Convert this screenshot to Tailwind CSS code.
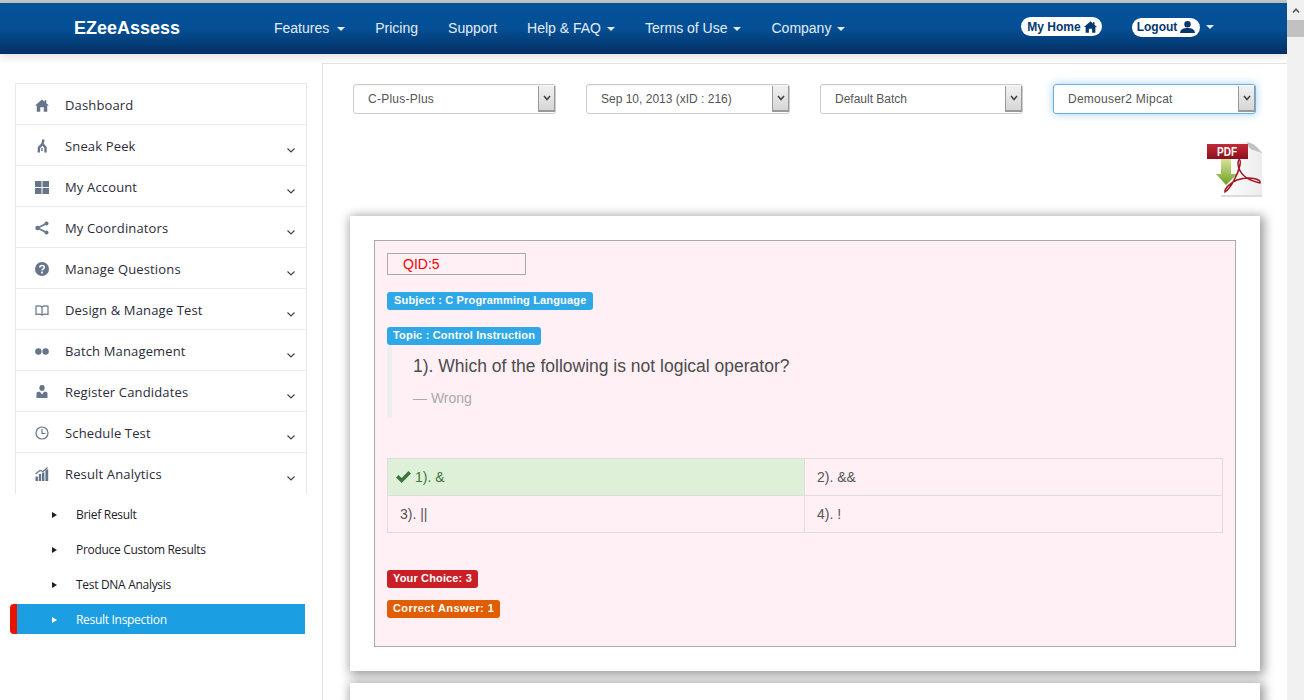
<!DOCTYPE html>
<html lang="en">
<head>
    <meta charset="UTF-8">
    <title>EZeeAssess</title>
    <script src="https://cdn.jsdelivr.net/npm/@tailwindcss/browser@4"></script>
</head>
<body class="bg-white font-['Liberation_Sans',Arial,sans-serif] text-[#555]">
<div class="flex h-[700px] w-[1304px] overflow-hidden">
    <div class="w-[1287px] shrink-0 h-[700px] overflow-hidden">
        <!-- top navbar -->
        <div class="h-[3px] bg-[#c4c4c4]"></div>
        <header class="relative z-10 h-[51px] flex items-center bg-gradient-to-b from-[#04529b] via-[#044f95] to-[#033064] text-[#e4ecf5] text-[14px] shadow-[0_3px_8px_rgba(0,0,0,0.12)]">
            <a class="w-[274px] pl-[74px] text-[18px] font-bold text-white">EZeeAssess</a>
            <nav class="flex gap-[30px] items-center -mt-[1px]">
                <a class="flex items-center gap-[8px]">Features <span class="w-0 h-0 border-x-[4px] border-x-transparent border-t-[4px] border-t-[#e4ecf5] mt-[2px]"></span></a>
                <a>Pricing</a>
                <a>Support</a>
                <a class="flex items-center gap-[6px]">Help &amp; FAQ <span class="w-0 h-0 border-x-[4px] border-x-transparent border-t-[4px] border-t-[#e4ecf5] mt-[2px]"></span></a>
                <a class="flex items-center gap-[6px]">Terms of Use <span class="w-0 h-0 border-x-[4px] border-x-transparent border-t-[4px] border-t-[#e4ecf5] mt-[2px]"></span></a>
                <a class="flex items-center gap-[6px]">Company <span class="w-0 h-0 border-x-[4px] border-x-transparent border-t-[4px] border-t-[#e4ecf5] mt-[2px]"></span></a>
            </nav>
            <div class="ml-auto mr-[73px] flex items-center -mt-[3px]">
                <a class="flex items-center justify-center gap-[3px] w-[81px] h-[19px] rounded-full bg-white text-[12px] font-bold text-[#06386f] -mt-[1px] pl-[1px]">My Home
                    <svg class="w-[13px] h-[12px]" viewBox="0 0 16 14" fill="#06386f"><path d="M8 0 L11 2.6 L11 1 L13 1 L13 4.4 L16 7 L14 7 L14 14 L10 14 L10 9 L6 9 L6 14 L2 14 L2 7 L0 7 Z"/></svg>
                </a>
                <a class="ml-[30px] flex items-center justify-center gap-[2px] w-[68px] h-[19px] rounded-full bg-white text-[12px] font-bold text-[#06386f] pl-[1px]">Logout
                    <svg class="w-[17px] h-[12px]" viewBox="0 0 16 13" fill="#06386f"><circle cx="8" cy="3.5" r="3.5"/><path d="M0 13 C0 8.5 4 7.5 8 7.5 C12 7.5 16 8.5 16 13 Z"/></svg>
                </a>
                <span class="ml-[6px] w-0 h-0 border-x-[4px] border-x-transparent border-t-[4px] border-t-[#e4ecf5]"></span>
            </div>
        </header>

        <div class="flex">
            <!-- left menu -->
            <aside class="w-[322px] shrink-0 pt-[29px] pl-[10px] font-['Open_Sans',sans-serif]">
                <ul class="ml-[5px] w-[292px] border border-b-0 border-[#e8e8e8] text-[13px] text-[#2b2b3a] tracking-[0.15px]">
                    <li class="h-[41px] flex items-center border-b border-[#ececec] pl-[19px] pt-[4px]">
                        <svg class="w-[14px] h-[13px] mr-[16px] mb-[2px]" viewBox="0 0 16 14" fill="#66758a"><path d="M8 0 L11 2.6 L11 1 L13 1 L13 4.4 L16 7 L14 7 L14 14 L10 14 L10 9 L6 9 L6 14 L2 14 L2 7 L0 7 Z"/></svg>Dashboard
                    </li>
                    <li class="h-[41px] flex items-center border-b border-[#ececec] pl-[19px] pt-[4px]">
                        <svg class="w-[14px] h-[14px] mr-[16px] mb-[2px]" viewBox="0 0 14 14" fill="none" stroke="#66758a" stroke-width="2.4"><path d="M8.5 0.5 L7.5 5 L4 8.5 L3.8 13.5"/><path d="M7.5 5 L10.5 8.5 L10.5 13.5"/><path d="M7 9 L7 12" stroke-width="1.4"/></svg>Sneak Peek
                        <svg class="ml-auto mr-[11px] mt-[6px] w-[8px] h-[5px]" viewBox="0 0 8 5" fill="none" stroke="#444" stroke-width="1.2"><path d="M0.5 0.5 L4 4 L7.5 0.5"/></svg>
                    </li>
                    <li class="h-[41px] flex items-center border-b border-[#ececec] pl-[19px] pt-[4px]">
                        <svg class="w-[14px] h-[13px] mr-[16px] mb-[2px]" viewBox="0 0 14 13" fill="#66758a"><rect width="6.5" height="6"/><rect x="7.5" width="6.5" height="6"/><rect y="7" width="6.5" height="6"/><rect x="7.5" y="7" width="6.5" height="6"/></svg>My Account
                        <svg class="ml-auto mr-[11px] mt-[6px] w-[8px] h-[5px]" viewBox="0 0 8 5" fill="none" stroke="#444" stroke-width="1.2"><path d="M0.5 0.5 L4 4 L7.5 0.5"/></svg>
                    </li>
                    <li class="h-[41px] flex items-center border-b border-[#ececec] pl-[19px] pt-[4px]">
                        <svg class="w-[14px] h-[14px] mr-[16px] mb-[2px]" viewBox="0 0 14 14" fill="#66758a" stroke="#66758a"><path d="M11.5 2.5 L2.5 7 L11.5 11.5" fill="none" stroke-width="1.6"/><circle cx="11.5" cy="2.5" r="2" stroke="none"/><circle cx="2.5" cy="7" r="2.2" stroke="none"/><circle cx="11.5" cy="11.5" r="2" stroke="none"/></svg>My Coordinators
                        <svg class="ml-auto mr-[11px] mt-[6px] w-[8px] h-[5px]" viewBox="0 0 8 5" fill="none" stroke="#444" stroke-width="1.2"><path d="M0.5 0.5 L4 4 L7.5 0.5"/></svg>
                    </li>
                    <li class="h-[41px] flex items-center border-b border-[#ececec] pl-[19px] pt-[4px]">
                        <svg class="w-[14px] h-[14px] mr-[16px] mb-[2px]" viewBox="0 0 14 14"><circle cx="7" cy="7" r="7" fill="#66758a"/><path d="M4.8 5.4 C4.8 2.9 9.3 2.9 9.3 5.3 C9.3 6.9 7 6.9 7 8.6" fill="none" stroke="#fff" stroke-width="1.6"/><rect x="6.1" y="9.6" width="1.8" height="1.8" fill="#fff"/></svg>Manage Questions
                        <svg class="ml-auto mr-[11px] mt-[6px] w-[8px] h-[5px]" viewBox="0 0 8 5" fill="none" stroke="#444" stroke-width="1.2"><path d="M0.5 0.5 L4 4 L7.5 0.5"/></svg>
                    </li>
                    <li class="h-[41px] flex items-center border-b border-[#ececec] pl-[19px] pt-[4px]">
                        <svg class="w-[14px] h-[11px] mr-[16px] mb-[2px]" viewBox="0 0 14 11" fill="none" stroke="#66758a" stroke-width="1.2"><path d="M7 2 C5.5 0.8 3 0.8 1 1.2 L1 9.5 C3 9 5.5 9 7 10 C8.5 9 11 9 13 9.5 L13 1.2 C11 0.8 8.5 0.8 7 2 Z M7 2 L7 10"/></svg>Design &amp; Manage Test
                        <svg class="ml-auto mr-[11px] mt-[6px] w-[8px] h-[5px]" viewBox="0 0 8 5" fill="none" stroke="#444" stroke-width="1.2"><path d="M0.5 0.5 L4 4 L7.5 0.5"/></svg>
                    </li>
                    <li class="h-[41px] flex items-center border-b border-[#ececec] pl-[19px] pt-[4px]">
                        <svg class="w-[14px] h-[7px] mr-[16px] mb-[2px]" viewBox="0 0 14 7" fill="#66758a"><circle cx="3.4" cy="3.5" r="3.2"/><circle cx="10.6" cy="3.5" r="3.2"/></svg>Batch Management
                        <svg class="ml-auto mr-[11px] mt-[6px] w-[8px] h-[5px]" viewBox="0 0 8 5" fill="none" stroke="#444" stroke-width="1.2"><path d="M0.5 0.5 L4 4 L7.5 0.5"/></svg>
                    </li>
                    <li class="h-[41px] flex items-center border-b border-[#ececec] pl-[19px] pt-[4px]">
                        <svg class="w-[14px] h-[14px] mr-[16px] mb-[2px]" viewBox="0 0 14 14" fill="#66758a"><rect x="4.4" y="0" width="5.2" height="6" rx="2.4"/><path d="M1.5 13 L1.5 8.5 C1.5 7 3 6.8 5 6.8 L7 9.5 L9 6.8 C11 6.8 12.5 7 12.5 8.5 L12.5 13 Z"/></svg>Register Candidates
                        <svg class="ml-auto mr-[11px] mt-[6px] w-[8px] h-[5px]" viewBox="0 0 8 5" fill="none" stroke="#444" stroke-width="1.2"><path d="M0.5 0.5 L4 4 L7.5 0.5"/></svg>
                    </li>
                    <li class="h-[41px] flex items-center border-b border-[#ececec] pl-[19px] pt-[4px]">
                        <svg class="w-[14px] h-[14px] mr-[16px] mb-[2px]" viewBox="0 0 14 14" fill="none" stroke="#66758a" stroke-width="1.2"><circle cx="7" cy="7" r="6"/><path d="M7 3 L7 7.5 L10.5 7.5"/></svg>Schedule Test
                        <svg class="ml-auto mr-[11px] mt-[6px] w-[8px] h-[5px]" viewBox="0 0 8 5" fill="none" stroke="#444" stroke-width="1.2"><path d="M0.5 0.5 L4 4 L7.5 0.5"/></svg>
                    </li>
                    <li class="h-[41px] flex items-center border-b border-transparent pl-[19px] pt-[4px]">
                        <svg class="w-[14px] h-[14px] mr-[16px] mb-[2px]" viewBox="0 0 14 14" fill="#66758a"><rect x="0.5" y="9.5" width="2.4" height="4.5"/><rect x="3.8" y="7" width="2.4" height="7"/><rect x="7" y="5.5" width="2.4" height="8.5"/><rect x="10.4" y="2.5" width="2.8" height="11.5"/><path d="M0.5 7 L5 3.5 L8 4.5 L12.5 0.5" fill="none" stroke="#66758a" stroke-width="1.2"/></svg>Result Analytics
                        <svg class="ml-auto mr-[11px] mt-[6px] w-[8px] h-[5px]" viewBox="0 0 8 5" fill="none" stroke="#444" stroke-width="1.2"><path d="M0.5 0.5 L4 4 L7.5 0.5"/></svg>
                    </li>
                </ul>
                <ul class="w-[295px] pt-[3px] text-[12px] text-[#1d1d2b] tracking-[-0.3px]">
                    <li class="h-[35px] flex items-center pl-[42px]"><span class="w-0 h-0 border-y-[3px] border-y-transparent border-l-[5px] border-l-[#1d1d2b] mr-[19px]"></span>Brief Result</li>
                    <li class="h-[35px] flex items-center pl-[42px]"><span class="w-0 h-0 border-y-[3px] border-y-transparent border-l-[5px] border-l-[#1d1d2b] mr-[19px]"></span>Produce Custom Results</li>
                    <li class="h-[35px] flex items-center pl-[42px]"><span class="w-0 h-0 border-y-[3px] border-y-transparent border-l-[5px] border-l-[#1d1d2b] mr-[19px]"></span>Test DNA Analysis</li>
                    <li class="h-[30px] mt-[2px] flex items-center pl-[35px] pt-[1px] bg-[#1b9fe2] text-white border-l-[7px] border-l-[#e81400] rounded-l-[4px]"><span class="w-0 h-0 border-y-[3px] border-y-transparent border-l-[5px] border-l-white mr-[19px]"></span>Result Inspection</li>
                </ul>
            </aside>

            <!-- main content -->
            <main class="flex-1 mt-[9px] h-[640px] border-l border-t border-[#e2e2e2] text-[12px] text-[#555]">
                <div class="flex gap-[30px] pl-[30px] pt-[20px]">
                    <div class="w-[203px] h-[30px] flex border border-[#ccc] rounded-[3px] shadow-[inset_0_1px_1px_rgba(0,0,0,0.05)]">
                        <span class="flex-1 pl-[14px] leading-[28px] tracking-[0.25px]">C-Plus-Plus</span>
                        <span class="w-[17px] my-[1px] flex items-center justify-center border-x border-[#999] border-b-2 bg-gradient-to-b from-[#f1f1f1] to-[#d6d6d6]"><svg class="w-[8px] h-[6px]" viewBox="0 0 8 6" fill="none" stroke="#444" stroke-width="1.6"><path d="M1 1 L4 4.5 L7 1"/></svg></span>
                    </div>
                    <div class="w-[204px] h-[30px] flex border border-[#ccc] rounded-[3px] shadow-[inset_0_1px_1px_rgba(0,0,0,0.05)]">
                        <span class="flex-1 pl-[14px] leading-[28px]">Sep 10, 2013 (xID : 216)</span>
                        <span class="w-[17px] my-[1px] flex items-center justify-center border-x border-[#999] border-b-2 bg-gradient-to-b from-[#f1f1f1] to-[#d6d6d6]"><svg class="w-[8px] h-[6px]" viewBox="0 0 8 6" fill="none" stroke="#444" stroke-width="1.6"><path d="M1 1 L4 4.5 L7 1"/></svg></span>
                    </div>
                    <div class="w-[203px] h-[30px] flex border border-[#ccc] rounded-[3px] shadow-[inset_0_1px_1px_rgba(0,0,0,0.05)]">
                        <span class="flex-1 pl-[14px] leading-[28px]">Default Batch</span>
                        <span class="w-[17px] my-[1px] flex items-center justify-center border-x border-[#999] border-b-2 bg-gradient-to-b from-[#f1f1f1] to-[#d6d6d6]"><svg class="w-[8px] h-[6px]" viewBox="0 0 8 6" fill="none" stroke="#444" stroke-width="1.6"><path d="M1 1 L4 4.5 L7 1"/></svg></span>
                    </div>
                    <div class="w-[203px] h-[30px] flex border border-[#66afe9] rounded-[3px] shadow-[0_0_8px_rgba(102,175,233,0.6)]">
                        <span class="flex-1 pl-[14px] leading-[28px] tracking-[0.25px]">Demouser2 Mipcat</span>
                        <span class="w-[17px] my-[1px] flex items-center justify-center border-x border-[#999] border-b-2 bg-gradient-to-b from-[#f1f1f1] to-[#d6d6d6]"><svg class="w-[8px] h-[6px]" viewBox="0 0 8 6" fill="none" stroke="#444" stroke-width="1.6"><path d="M1 1 L4 4.5 L7 1"/></svg></span>
                    </div>
                </div>

                <!-- pdf download -->
                <div class="flex justify-end pr-[24px] pt-[27px] h-[102px]">
                    <svg class="w-[56px] h-[57px]" viewBox="0 0 56 57">
                        <defs>
                            <linearGradient id="pdfred" x1="0" y1="0" x2="0" y2="1"><stop offset="0" stop-color="#c22a38"/><stop offset="1" stop-color="#8c0f1c"/></linearGradient>
                            <linearGradient id="pdfgreen" x1="0" y1="0" x2="0" y2="1"><stop offset="0" stop-color="#d5e598"/><stop offset="1" stop-color="#6f9e1f"/></linearGradient>
                            <linearGradient id="pdfpage" x1="0" y1="0" x2="1" y2="0"><stop offset="0" stop-color="#ffffff"/><stop offset="1" stop-color="#ececec"/></linearGradient>
                        </defs>
                        <path d="M14 1 L40 1 C42 8 48 8 55 11 L55 55 L14 55 Z" fill="url(#pdfpage)"/>
                        <path d="M40 1 C41 10 48 9 55 12 C50 5 46 2 40 1 Z" fill="#c2c2c2"/>
                        <rect x="14" y="54" width="41" height="2" fill="#dcdcdc"/>
                        <rect x="0" y="3" width="41" height="15" fill="url(#pdfred)"/>
                        <text x="10" y="14.5" font-size="12.5" font-weight="700" fill="#fff" font-family="'Liberation Sans',sans-serif" textLength="20" lengthAdjust="spacingAndGlyphs">PDF</text>
                        <path d="M14 18 L24 18 L24 33 L30 33 L19 44 L9 33 L14 33 Z" fill="url(#pdfgreen)"/>
                        <path d="M18 51 C24 47 31 33 33 24 C34 17 31 17 31 23 C32 33 39 39 53 42 C55 38 42 35 30 39 C24 41 17 48 18 51 Z" fill="none" stroke="#a3141f" stroke-width="1.5"/>
                    </svg>
                </div>

                <!-- question card -->
                <section class="ml-[27px] w-[910px] h-[455px] bg-white p-[24px] shadow-[2px_2px_10px_2px_rgba(0,0,0,0.4)]">
                    <div class="h-[407px] border border-[#aaa] bg-[#fff0f5] px-[12px] pt-[12px]">
                        <div class="w-[139px] h-[22px] border border-[#aaa] pl-[15px] text-[14px] leading-[20px] text-[#f00]">QID:5</div>
                        <div class="mt-[16px]"><span class="inline-block h-[18px] px-[7px] rounded-[3px] bg-[#2fa8e8] text-[11px] leading-[17px] font-bold text-white tracking-[0.17px]">Subject : C Programming Language</span></div>
                        <div class="mt-[17px]"><span class="block w-fit h-[18px] px-[6px] rounded-[3px] bg-[#2fa8e8] text-[11px] leading-[17px] font-bold text-white tracking-[0.18px]">Topic : Control Instruction</span></div>
                        <blockquote class="h-[73px] border-l-[5px] border-[#eee] pl-[21px] pt-[10px]">
                            <p class="text-[17.5px] leading-[22px] text-[#4c4c4c]">1). Which of the following is not logical operator?</p>
                            <p class="mt-[11px] text-[14px] leading-[20px] text-[#aaa]">— Wrong</p>
                        </blockquote>
                        <table class="mt-[40px] w-[836px] table-fixed border-collapse text-[14px] text-[#555]">
                            <tbody>
                                <tr class="h-[37px]">
                                    <td class="w-[417px] border border-[#ddd] bg-[#dff0d8] pl-[8px] text-[#3c763d]"><svg class="inline-block w-[15px] h-[12px] mr-[4px] align-[-1px]" viewBox="0 0 15 12" fill="#3c763d"><path d="M0 6.5 L2.5 4 L5.7 7 L12.5 0 L15 2.5 L5.7 12 Z"/></svg>1). &amp;</td>
                                    <td class="border border-[#ddd] pl-[12px]">2). &amp;&amp;</td>
                                </tr>
                                <tr class="h-[37px]">
                                    <td class="border border-[#ddd] pl-[12px]">3). ||</td>
                                    <td class="border border-[#ddd] pl-[12px]">4). !</td>
                                </tr>
                            </tbody>
                        </table>
                        <div class="mt-[36px]"><span class="inline-block h-[18px] px-[6px] rounded-[3px] bg-[#c91f27] text-[11px] leading-[17px] font-bold text-white tracking-[0.15px]">Your Choice: 3</span></div>
                        <div class="mt-[11px]"><span class="inline-block h-[18px] px-[6px] rounded-[3px] bg-[#e05d00] text-[11px] leading-[17px] font-bold text-white tracking-[0.4px]">Correct Answer: 1</span></div>
                    </div>
                </section>
                <section class="ml-[27px] mt-[12px] w-[910px] h-[40px] bg-white shadow-[2px_2px_10px_2px_rgba(0,0,0,0.4)]"></section>
            </main>
        </div>
    </div>

    <!-- page scrollbar -->
    <div class="w-[17px] shrink-0 h-[700px] bg-[#f1f1f1] flex flex-col items-center">
        <div class="h-[20px] flex items-center justify-center">
            <svg class="w-[8px] h-[5px]" viewBox="0 0 8 5" fill="none" stroke="#555" stroke-width="1.5"><path d="M1 4.5 L4 1.2 L7 4.5"/></svg>
        </div>
        <div class="w-[17px] h-[17px] bg-[#c1c1c1]"></div>
    </div>
</div>
</body>
</html>
